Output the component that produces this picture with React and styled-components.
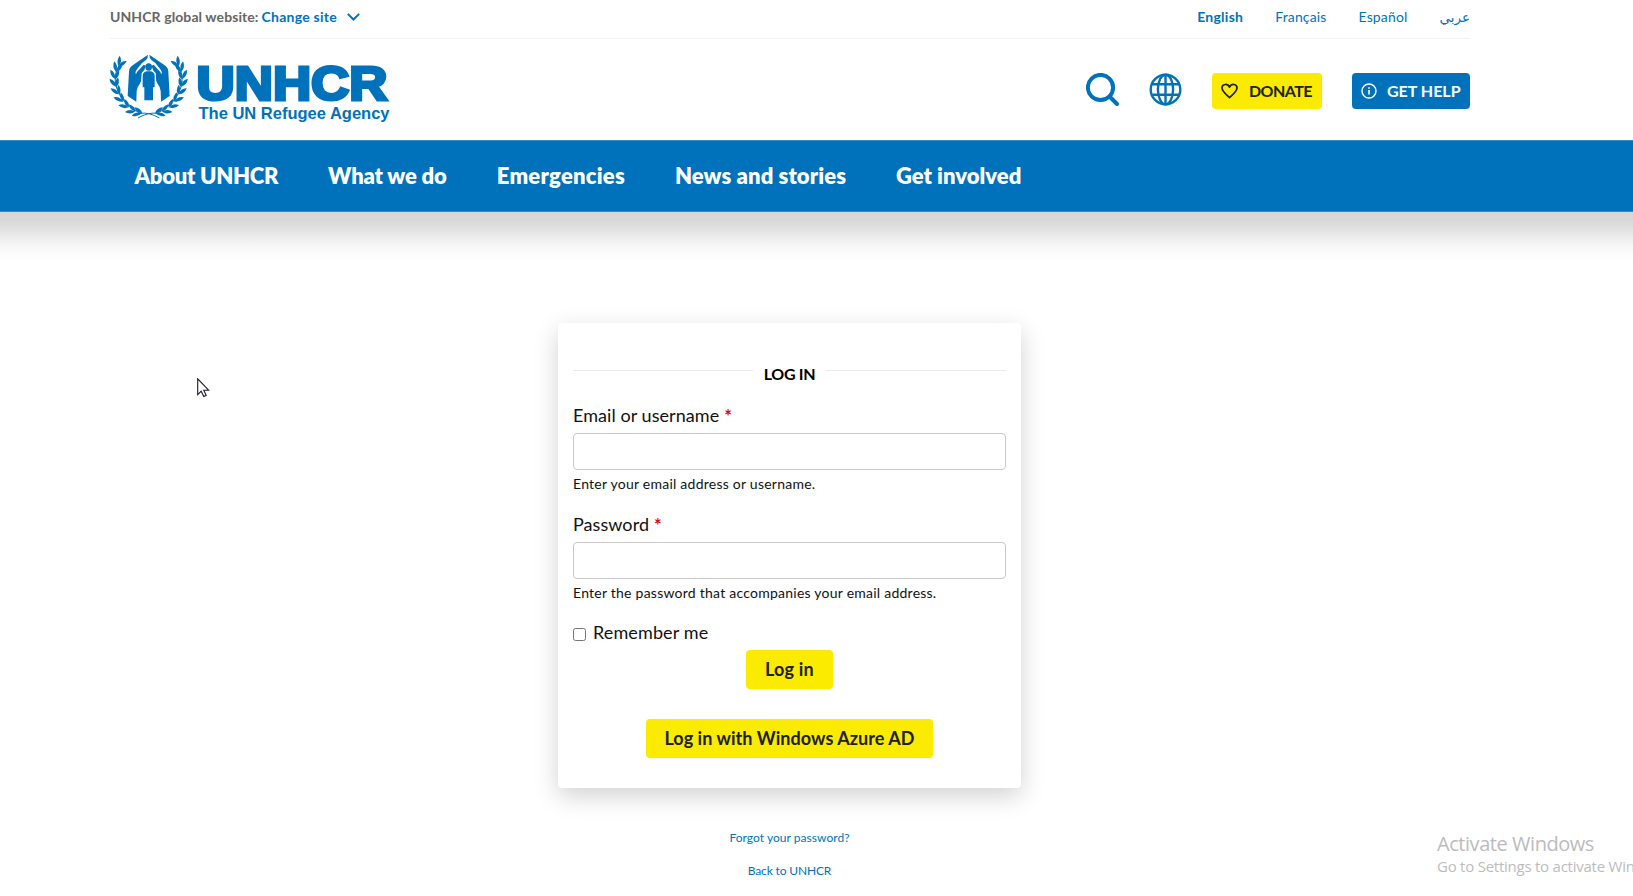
import React from 'react';
import styled, { createGlobalStyle } from 'styled-components';

const BLUE = '#0072bc';
const YELLOW = '#faeb00';

const GlobalStyle = createGlobalStyle`
  * { box-sizing: border-box; }
  html, body { margin: 0; background: #fff; overflow: hidden; }
  body { font-family: Lato, "DejaVu Sans", sans-serif; color: #000; }
`;

const Page = styled.div`
  position: relative;
  height: 896px;
  overflow: hidden;
`;

const Container = styled.div`
  width: 1360px;
  margin-left: 110px;
`;

const Text = styled.span`
  letter-spacing: ${(p) => p.$track || 0}px;
  white-space: nowrap;
`;

const TopBar = styled(Container)`
  height: 39px;
  padding-top: 7px;
  border-bottom: 1px solid #f2f2f2;
  display: flex;
  justify-content: space-between;
  font-size: 14px;
  line-height: 20px;
`;

const SiteSwitch = styled.div`
  display: flex;
  align-items: flex-start;
  font-weight: 700;
  color: #666;
`;

const ChangeSite = styled.a`
  display: flex;
  align-items: center;
  gap: 10px;
  margin-left: 3px;
  color: ${BLUE};
`;

const Languages = styled.nav`
  display: flex;
  gap: 32px;
  color: ${BLUE};
`;

const Language = styled.a`
  font-weight: ${(p) => (p.$active ? 700 : 400)};
  letter-spacing: ${(p) => p.$track || 0}px;
`;

const ArabicLanguage = styled(Language)`
  font-family: "DejaVu Sans", sans-serif;
  font-size: 13.5px;
`;

const Masthead = styled(Container)`
  height: 101px;
  display: flex;
  justify-content: space-between;
  align-items: flex-start;
`;

const Logo = styled.svg`
  display: block;
  margin-top: 11px;
  margin-left: -6px;
`;

const Actions = styled.div`
  display: flex;
  align-items: center;
  height: 36px;
  margin-top: 34px;
`;

const IconButton = styled.a`
  display: flex;
  height: 36px;
  margin-right: ${(p) => p.$after}px;
`;

const ActionButton = styled.a`
  display: flex;
  align-items: center;
  height: 36px;
  width: ${(p) => p.$width}px;
  margin-left: ${(p) => p.$before || 0}px;
  padding-left: 9px;
  gap: ${(p) => p.$gap}px;
  border-radius: 4px;
  background: ${(p) => (p.$primary ? BLUE : YELLOW)};
  color: ${(p) => (p.$primary ? '#fff' : '#212121')};
  font-size: 16px;
  font-weight: 700;
  line-height: 20px;
`;

const ActionText = styled(Text)`
  padding-bottom: 1px;
`;

const MainNav = styled.nav`
  height: 72px;
  background: ${BLUE};
  border: solid #2f8dcb;
  border-width: 1px 0;
`;

const NavList = styled(Container)`
  display: flex;
  align-items: center;
  height: 70px;
  padding-left: 24.5px;
  gap: 50px;
`;

const NavItem = styled.a`
  color: #fff;
  font-size: 22px;
  line-height: 28px;
  font-weight: 800;
  white-space: nowrap;
  letter-spacing: ${(p) => p.$track}px;
`;

const Main = styled.main`
  width: 100%;
  height: 684px;
  padding-top: 111px;
  background: linear-gradient(#d6d6d6 0, #d9d9d9 9px, #e0e0e0 16px, #ebebeb 24px, #f5f5f5 32px, #fbfbfb 40px, #fff 50px) no-repeat 0 0 / 100% 50px;
`;

const Column = styled.div`
  width: 1579px;
  display: flex;
  flex-direction: column;
  align-items: center;
`;

const Card = styled.form`
  width: 463px;
  height: 465px;
  padding: 40px 15px 0;
  border-radius: 4px;
  background: #fff;
  box-shadow: 0 8px 24px rgba(0, 0, 0, 0.18);
  display: flex;
  flex-direction: column;
`;

const CardTitle = styled.h1`
  display: flex;
  align-items: flex-start;
  margin: 0 0 19px;
  font-size: 16px;
  line-height: 20px;
  font-weight: 700;
  gap: 11px;
`;

const TitleText = styled(Text)`
  padding-top: 1px;
`;

const Rule = styled.span`
  flex: 1;
  height: 1px;
  margin-top: 7px;
  background: #ebebeb;
`;

const Field = styled.div`
  display: flex;
  flex-direction: column;
  margin-bottom: 18px;
`;

const Label = styled.label`
  font-size: 18px;
  line-height: 24px;
  letter-spacing: 0.06px;
  margin-bottom: 6px;
  color: #111;
`;

const Required = styled.span`
  color: #e60000;
  font-size: 18px;
  font-weight: 700;
  line-height: 0;
  vertical-align: -1px;
  margin-left: 5px;
`;

const Input = styled.input`
  width: 100%;
  height: 37px;
  border: 1px solid #c8c8c8;
  border-radius: 4px;
  background: #fff;
  margin: 0 0 4px;
`;

const Help = styled.div`
  font-size: 14px;
  line-height: 20px;
  letter-spacing: 0.24px;
  color: #111;
`;

const Remember = styled.label`
  display: flex;
  align-items: flex-start;
  gap: 7px;
  flex: none;
  height: 29px;
  font-size: 18px;
  line-height: 22px;
  color: #111;
`;

const Checkbox = styled.input`
  width: 13px;
  height: 13px;
  margin: 7px 0 0;
`;

const SubmitButton = styled.button`
  align-self: center;
  flex: none;
  width: ${(p) => p.$width}px;
  height: 39px;
  margin: 0 0 30px;
  padding: 0 0 2px;
  border: 0;
  border-radius: 4px;
  background: ${YELLOW};
  color: #212121;
  font: 700 18px/24px Lato, sans-serif;
`;

const Links = styled.div`
  display: flex;
  flex-direction: column;
  align-items: center;
  gap: 13px;
  margin-top: 40px;
  font-size: 12px;
  line-height: 20px;
  color: ${BLUE};
`;

const Watermark = styled.div`
  position: absolute;
  left: 1437px;
  top: 830px;
  font-family: "Open Sans", sans-serif;
  color: #bcbcbc;
  white-space: nowrap;
`;

const WatermarkTitle = styled.div`
  font-size: 20px;
  line-height: 28px;
  letter-spacing: -0.45px;
`;

const WatermarkNote = styled.div`
  font-size: 15px;
  line-height: 16px;
  letter-spacing: -0.24px;
`;

const Pointer = styled.svg`
  position: absolute;
  left: 197px;
  top: 378px;
`;

const LEAVES = [
  [112, 189, -82],
  [92, 184, -70],
  [72, 171, -56],
  [56, 153, -44],
  [44, 131, -32],
  [36, 108, -18],
  [33, 85, -4],
  [36, 63, 14],
  [45, 47, 28],
];

const Branch = () => (
  <g>
    <path d="M166 204 Q136 186 108 190 Q54 162 38 114 Q26 78 45 47" fill="none" stroke={BLUE} strokeWidth="3" />
    {LEAVES.map(([x, y, a]) => (
      <g key={a} transform={`translate(${x} ${y}) rotate(${a})`} fill={BLUE}>
        <path d="M0 2 Q-15 -8 -12 -27 Q4 -18 0 2Z" />
        <path d="M0 3 Q15 -4 14 -23 Q-2 -16 0 3Z" />
      </g>
    ))}
  </g>
);

const Hand = () => (
  <path
    d="M132 14 L86 46 Q76 52 75 65 L71 138 L97 155 L98 123 Q99 111 107 102 Q113 94 112 83 L113 69 Q124 59 125 47 L119 44 L104 61 Q98 65 96 73 Q92 67 99 58 L114 39 L126 30 Q132 24 132 14Z"
    fill={BLUE}
  />
);

const UnhcrLogo = () => (
  <Logo width="296" height="78" viewBox="0 0 296 78">
    <g transform="scale(0.33333)">
      <Branch />
      <Hand />
      <g transform="translate(268 0) scale(-1 1)">
        <Branch />
        <Hand />
      </g>
      <ellipse cx="134" cy="51" rx="10" ry="11" fill={BLUE} />
      <path d="M127 64 H141 Q152 67 152 78 V112 H147 V151 H121 V112 H116 V78 Q116 67 127 64Z" fill={BLUE} />
    </g>
    <text x="92.5" y="49.5" fontFamily="Liberation Sans, Arial, sans-serif" fontWeight="700" fontSize="48.5" textLength="191" lengthAdjust="spacingAndGlyphs" fill={BLUE} stroke={BLUE} strokeWidth="3.2">UNHCR</text>
    <text x="94.5" y="69" fontFamily="Liberation Sans, Arial, sans-serif" fontWeight="700" fontSize="17" textLength="191" lengthAdjust="spacingAndGlyphs" fill={BLUE}>The UN Refugee Agency</text>
  </Logo>
);

const SearchIcon = () => (
  <svg width="34" height="36" viewBox="0 0 34 36" fill="none" stroke={BLUE} strokeWidth="4" strokeLinecap="round">
    <circle cx="14.5" cy="14.5" r="12.6" />
    <path d="M24 24 L31 31" />
  </svg>
);

const GlobeIcon = () => (
  <svg width="33" height="36" viewBox="0 0 33 36" fill="none" stroke={BLUE} strokeWidth="2.4">
    <circle cx="16.5" cy="16.5" r="14.8" />
    <ellipse cx="16.5" cy="16.5" rx="7.6" ry="14.8" />
    <path d="M16.5 1.5 V31.5 M3.3 11.2 H29.7 M3.3 21.8 H29.7" />
  </svg>
);

const HeartIcon = () => (
  <svg width="17" height="16" viewBox="0 0 17 16" fill="none" stroke="#212121" strokeWidth="1.7" strokeLinejoin="round">
    <path d="M8.5 14.6 C4.5 10.9 1 8 1 4.9 C1 0.8 6.6 0.2 8.5 4.1 C10.4 0.2 16 0.8 16 4.9 C16 8 12.5 10.9 8.5 14.6Z" />
  </svg>
);

const InfoIcon = () => (
  <svg width="16" height="16" viewBox="0 0 16 16" fill="none" stroke="#fff" strokeWidth="1.4">
    <circle cx="8" cy="8" r="7" />
    <path d="M8 7 V11.6 M8 4.2 V5.8" strokeWidth="1.6" />
  </svg>
);

const Chevron = () => (
  <svg width="13" height="8" viewBox="0 0 13 8" fill="none" stroke={BLUE} strokeWidth="2">
    <path d="M0.8 0.9 L6.5 6.5 L12.2 0.9" />
  </svg>
);

const NAV = [
  ['About UNHCR', -0.28],
  ['What we do', -0.16],
  ['Emergencies', 0.24],
  ['News and stories', 0.09],
  ['Get involved', 0.02],
];

export default function App() {
  return (
    <Page>
      <GlobalStyle />
      <TopBar>
        <SiteSwitch>
          <Text $track={0.09}>UNHCR global website:</Text>
          <ChangeSite>
            <Text $track={0.25}>Change site</Text>
            <Chevron />
          </ChangeSite>
        </SiteSwitch>
        <Languages>
          <Language $active $track={0.25}>English</Language>
          <Language $track={0.15}>Français</Language>
          <Language $track={0.15}>Español</Language>
          <ArabicLanguage lang="ar">عربي</ArabicLanguage>
        </Languages>
      </TopBar>
      <Masthead>
        <UnhcrLogo />
        <Actions>
          <IconButton $after={29}><SearchIcon /></IconButton>
          <IconButton $after={30}><GlobeIcon /></IconButton>
          <ActionButton $width={110} $gap={11}>
            <HeartIcon />
            <ActionText $track={-0.55}>DONATE</ActionText>
          </ActionButton>
          <ActionButton $primary $width={118} $before={30} $gap={10}>
            <InfoIcon />
            <ActionText>GET HELP</ActionText>
          </ActionButton>
        </Actions>
      </Masthead>
      <MainNav>
        <NavList>
          {NAV.map(([label, track]) => (
            <NavItem key={label} $track={track}>{label}</NavItem>
          ))}
        </NavList>
      </MainNav>
      <Main>
        <Column>
          <Card>
            <CardTitle>
              <Rule />
              <TitleText $track={-0.3}>LOG IN</TitleText>
              <Rule />
            </CardTitle>
            <Field>
              <Label>Email or username<Required>*</Required></Label>
              <Input type="text" />
              <Help>Enter your email address or username.</Help>
            </Field>
            <Field>
              <Label>Password<Required>*</Required></Label>
              <Input type="password" />
              <Help>Enter the password that accompanies your email address.</Help>
            </Field>
            <Remember>
              <Checkbox type="checkbox" />
              <Text $track={0.12}>Remember me</Text>
            </Remember>
            <SubmitButton type="button" $width={87}>
              <Text $track={0.2}>Log in</Text>
            </SubmitButton>
            <SubmitButton type="button" $width={287}>
              <Text $track={0.05}>Log in with Windows Azure AD</Text>
            </SubmitButton>
          </Card>
          <Links>
            <Text $track={0.04}>Forgot your password?</Text>
            <Text $track={-0.15}>Back to UNHCR</Text>
          </Links>
        </Column>
      </Main>
      <Watermark>
        <WatermarkTitle>Activate Windows</WatermarkTitle>
        <WatermarkNote>Go to Settings to activate Windows.</WatermarkNote>
      </Watermark>
      <Pointer width="14" height="21" viewBox="0 0 14 21">
        <path d="M0.7 0.8 V16.6 L4.2 13.2 L6.8 18.6 L9.2 17.4 L6.8 12.2 H11.6 Z" fill="#fff" stroke="#1a1a2a" strokeWidth="1.1" />
      </Pointer>
    </Page>
  );
}
